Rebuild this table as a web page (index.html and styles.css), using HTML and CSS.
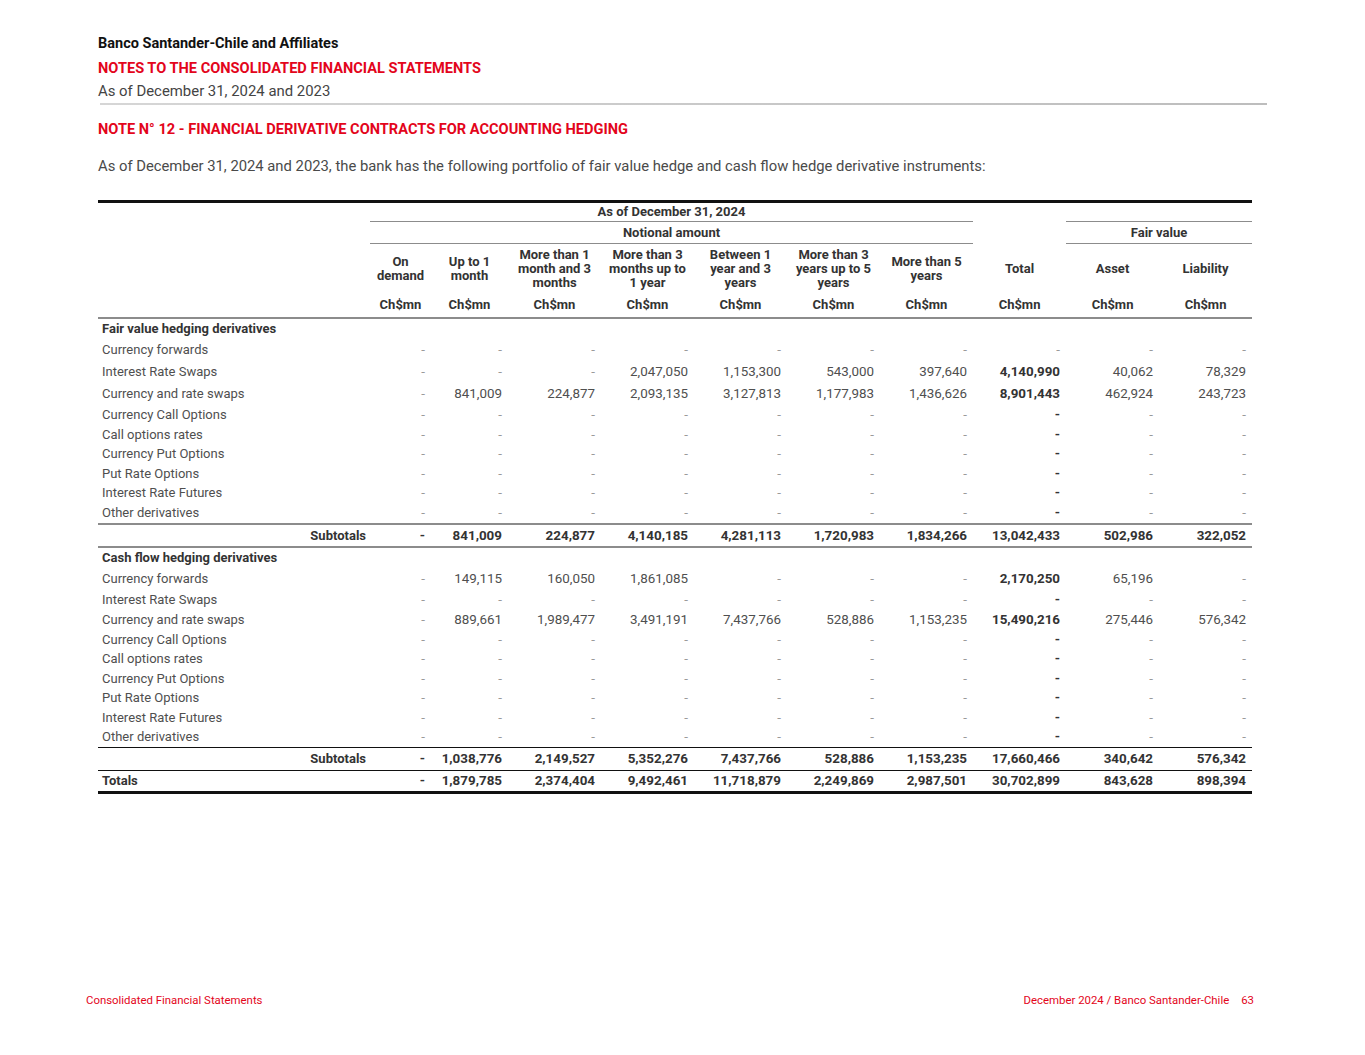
FILE: index.html
```html
<!DOCTYPE html>
<html lang="en">
<head>
<meta charset="utf-8">
<title>Note 12 - Financial derivative contracts for accounting hedging</title>
<link rel="stylesheet" href="styles.css">
</head>
<body>
<div class="page">
  <header class="doc-head">
    <div class="entity">Banco Santander-Chile and Affiliates</div>
    <div class="doc-title">NOTES TO THE CONSOLIDATED FINANCIAL STATEMENTS</div>
    <div class="doc-date">As of December 31, 2024 and 2023</div>
    <div class="head-rule"></div>
  </header>

  <main class="content">
    <h1 class="note-title">NOTE N° 12 - FINANCIAL DERIVATIVE CONTRACTS FOR ACCOUNTING HEDGING</h1>
    <p class="intro">As of December 31, 2024 and 2023, the bank has the following portfolio of fair value hedge and cash flow hedge derivative instruments:</p>

    <table class="fin">
      <colgroup>
        <col class="c-label"><col class="c-od"><col class="c-u1">
        <col class="c-n"><col class="c-n"><col class="c-n"><col class="c-n"><col class="c-n">
        <col class="c-n"><col class="c-n"><col class="c-n">
      </colgroup>
      <thead>
        <tr class="h1">
          <th></th>
          <th colspan="7" class="span-line">As of December 31, 2024</th>
          <th></th>
          <th colspan="2" class="span-line"></th>
        </tr>
        <tr class="h2">
          <th></th>
          <th colspan="7" class="span-line">Notional amount</th>
          <th></th>
          <th colspan="2" class="span-line">Fair value</th>
        </tr>
        <tr class="h3">
          <th></th>
          <th>On<br>demand</th>
          <th>Up to 1<br>month</th>
          <th>More than 1<br>month and 3<br>months</th>
          <th>More than 3<br>months up to<br>1 year</th>
          <th>Between 1<br>year and 3<br>years</th>
          <th>More than 3<br>years up to 5<br>years</th>
          <th>More than 5<br>years</th>
          <th>Total</th>
          <th>Asset</th>
          <th>Liability</th>
        </tr>
        <tr class="h4">
          <th></th>
          <th>Ch$mn</th><th>Ch$mn</th><th>Ch$mn</th><th>Ch$mn</th><th>Ch$mn</th>
          <th>Ch$mn</th><th>Ch$mn</th><th>Ch$mn</th><th>Ch$mn</th><th>Ch$mn</th>
        </tr>
      </thead>
      <tbody>
        <tr class="sec"><td colspan="11">Fair value hedging derivatives</td></tr>
        <tr class="r22"><td>Currency forwards</td><td class="d">-</td><td class="d">-</td><td class="d">-</td><td class="d">-</td><td class="d">-</td><td class="d">-</td><td class="d">-</td><td class="d">-</td><td class="d">-</td><td class="d">-</td></tr>
        <tr class="r22"><td>Interest Rate Swaps</td><td class="d">-</td><td class="d">-</td><td class="d">-</td><td>2,047,050</td><td>1,153,300</td><td>543,000</td><td>397,640</td><td class="t">4,140,990</td><td>40,062</td><td>78,329</td></tr>
        <tr class="r22"><td>Currency and rate swaps</td><td class="d">-</td><td>841,009</td><td>224,877</td><td>2,093,135</td><td>3,127,813</td><td>1,177,983</td><td>1,436,626</td><td class="t">8,901,443</td><td>462,924</td><td>243,723</td></tr>
        <tr class="r20"><td>Currency Call Options</td><td class="d">-</td><td class="d">-</td><td class="d">-</td><td class="d">-</td><td class="d">-</td><td class="d">-</td><td class="d">-</td><td class="t">-</td><td class="d">-</td><td class="d">-</td></tr>
        <tr class="r19"><td>Call options rates</td><td class="d">-</td><td class="d">-</td><td class="d">-</td><td class="d">-</td><td class="d">-</td><td class="d">-</td><td class="d">-</td><td class="t">-</td><td class="d">-</td><td class="d">-</td></tr>
        <tr class="r19"><td>Currency Put Options</td><td class="d">-</td><td class="d">-</td><td class="d">-</td><td class="d">-</td><td class="d">-</td><td class="d">-</td><td class="d">-</td><td class="t">-</td><td class="d">-</td><td class="d">-</td></tr>
        <tr class="r19"><td>Put Rate Options</td><td class="d">-</td><td class="d">-</td><td class="d">-</td><td class="d">-</td><td class="d">-</td><td class="d">-</td><td class="d">-</td><td class="t">-</td><td class="d">-</td><td class="d">-</td></tr>
        <tr class="r19"><td>Interest Rate Futures</td><td class="d">-</td><td class="d">-</td><td class="d">-</td><td class="d">-</td><td class="d">-</td><td class="d">-</td><td class="d">-</td><td class="t">-</td><td class="d">-</td><td class="d">-</td></tr>
        <tr class="r21"><td>Other derivatives</td><td class="d">-</td><td class="d">-</td><td class="d">-</td><td class="d">-</td><td class="d">-</td><td class="d">-</td><td class="d">-</td><td class="t">-</td><td class="d">-</td><td class="d">-</td></tr>
        <tr class="sub sub-grey"><td>Subtotals</td><td>-</td><td>841,009</td><td>224,877</td><td>4,140,185</td><td>4,281,113</td><td>1,720,983</td><td>1,834,266</td><td>13,042,433</td><td>502,986</td><td>322,052</td></tr>

        <tr class="sec"><td colspan="11">Cash flow hedging derivatives</td></tr>
        <tr class="r22"><td>Currency forwards</td><td class="d">-</td><td>149,115</td><td>160,050</td><td>1,861,085</td><td class="d">-</td><td class="d">-</td><td class="d">-</td><td class="t">2,170,250</td><td>65,196</td><td class="d">-</td></tr>
        <tr class="r20"><td>Interest Rate Swaps</td><td class="d">-</td><td class="d">-</td><td class="d">-</td><td class="d">-</td><td class="d">-</td><td class="d">-</td><td class="d">-</td><td class="t">-</td><td class="d">-</td><td class="d">-</td></tr>
        <tr class="r19"><td>Currency and rate swaps</td><td class="d">-</td><td>889,661</td><td>1,989,477</td><td>3,491,191</td><td>7,437,766</td><td>528,886</td><td>1,153,235</td><td class="t">15,490,216</td><td>275,446</td><td>576,342</td></tr>
        <tr class="r19"><td>Currency Call Options</td><td class="d">-</td><td class="d">-</td><td class="d">-</td><td class="d">-</td><td class="d">-</td><td class="d">-</td><td class="d">-</td><td class="t">-</td><td class="d">-</td><td class="d">-</td></tr>
        <tr class="r19"><td>Call options rates</td><td class="d">-</td><td class="d">-</td><td class="d">-</td><td class="d">-</td><td class="d">-</td><td class="d">-</td><td class="d">-</td><td class="t">-</td><td class="d">-</td><td class="d">-</td></tr>
        <tr class="r19"><td>Currency Put Options</td><td class="d">-</td><td class="d">-</td><td class="d">-</td><td class="d">-</td><td class="d">-</td><td class="d">-</td><td class="d">-</td><td class="t">-</td><td class="d">-</td><td class="d">-</td></tr>
        <tr class="r19"><td>Put Rate Options</td><td class="d">-</td><td class="d">-</td><td class="d">-</td><td class="d">-</td><td class="d">-</td><td class="d">-</td><td class="d">-</td><td class="t">-</td><td class="d">-</td><td class="d">-</td></tr>
        <tr class="r19"><td>Interest Rate Futures</td><td class="d">-</td><td class="d">-</td><td class="d">-</td><td class="d">-</td><td class="d">-</td><td class="d">-</td><td class="d">-</td><td class="t">-</td><td class="d">-</td><td class="d">-</td></tr>
        <tr class="r19"><td>Other derivatives</td><td class="d">-</td><td class="d">-</td><td class="d">-</td><td class="d">-</td><td class="d">-</td><td class="d">-</td><td class="d">-</td><td class="t">-</td><td class="d">-</td><td class="d">-</td></tr>
        <tr class="sub sub-black"><td>Subtotals</td><td>-</td><td>1,038,776</td><td>2,149,527</td><td>5,352,276</td><td>7,437,766</td><td>528,886</td><td>1,153,235</td><td>17,660,466</td><td>340,642</td><td>576,342</td></tr>
        <tr class="totals"><td>Totals</td><td>-</td><td>1,879,785</td><td>2,374,404</td><td>9,492,461</td><td>11,718,879</td><td>2,249,869</td><td>2,987,501</td><td>30,702,899</td><td>843,628</td><td>898,394</td></tr>
      </tbody>
    </table>
  </main>

  <footer class="doc-foot">
    <span>Consolidated Financial Statements</span>
    <span>December 2024 / Banco Santander-Chile<span class="pg">63</span></span>
  </footer>
</div>
</body>
</html>
```

FILE: styles.css
```css
* { box-sizing: border-box; }

html, body {
  margin: 0;
  padding: 0;
  background: #ffffff;
}

body {
  font-family: Roboto, "Liberation Sans", Arial, sans-serif;
  color: #4a4a4a;
}

.page {
  width: 1365px;
  min-height: 1055px;
  display: flex;
  flex-direction: column;
}

.doc-head {
  padding-top: 32px;
  padding-left: 98px;
}

.entity {
  font-size: 14.5px;
  line-height: 24px;
  font-weight: 700;
  color: #111;
}

.doc-title {
  font-size: 14.6px;
  line-height: 24px;
  font-weight: 700;
  color: #e3051b;
}

.doc-date {
  font-size: 14.9px;
  line-height: 23px;
  color: #444;
}

.head-rule {
  margin-left: 2px;
  width: 1167px;
  height: 2px;
  background: linear-gradient(to right, #d6d6d6, #bdbdbd);
}

.content {
  padding-left: 98px;
}

.note-title {
  margin: 14px 0 0;
  font-size: 14.6px;
  line-height: 20px;
  font-weight: 700;
  color: #e3051b;
}

.intro {
  margin: 17px 0 0;
  font-size: 14.8px;
  line-height: 20px;
  color: #4a4a4a;
}

.fin {
  margin-top: 24px;
  width: 1154px;
  border-collapse: collapse;
  table-layout: fixed;
  font-size: 13px;
  border-top: 3px solid #111;
  border-bottom: 3px solid #111;
}

.c-label { width: 272px; }
.c-od { width: 61px; }
.c-u1 { width: 77px; }
.c-n { width: 93px; }

.fin th {
  padding: 0 6px 0 0;
  font-weight: 700;
  color: #333;
  text-align: center;
  white-space: nowrap;
  vertical-align: middle;
}

.fin .h1 th { height: 20px; line-height: 16px; padding-right: 0; }
.fin .h2 th { height: 22px; line-height: 16px; padding-right: 0; }
.fin .h3 th { height: 50px; line-height: 14px; padding: 0; }
.fin .h4 th { height: 24px; line-height: 16px; padding: 0; border-bottom: 2px solid #8c8c8c; }

.fin .span-line { border-bottom: 1px solid #8c8c8c; }

.fin td {
  padding: 0 6px 0 0;
  text-align: right;
  white-space: nowrap;
  line-height: 16px;
  vertical-align: middle;
  color: #4f4f4f;
  font-size: 13.4px;
}

.fin td:first-child {
  text-align: left;
  padding-left: 4px;
  font-size: 13px;
}

.fin .sec td {
  height: 21px;
  font-weight: 700;
  color: #333;
}

.fin .r22 td { height: 22px; }
.fin .r21 td { height: 21px; }
.fin .r20 td { height: 20.5px; }
.fin .r19 td { height: 19.5px; }

.fin td.d { color: #9a9a9a; }
.fin td.t { font-weight: 700; color: #333; }

.fin .sub td {
  height: 23px;
  font-weight: 700;
  color: #333;
}

.fin .sub td:first-child {
  text-align: right;
  padding-right: 4px;
}

.fin .sub-grey td {
  border-top: 2px solid #8c8c8c;
  border-bottom: 2px solid #8c8c8c;
}

.fin .sub-black td {
  border-top: 1px solid #111;
  border-bottom: 1px solid #111;
}

.fin .totals td {
  height: 22px;
  font-weight: 700;
  color: #333;
}

.doc-foot {
  margin-top: auto;
  padding: 0 111px 48px 86px;
  display: flex;
  justify-content: space-between;
  font-size: 11.4px;
  line-height: 14px;
  color: #e3051b;
}

.doc-foot .pg {
  margin-left: 12px;
}
```
